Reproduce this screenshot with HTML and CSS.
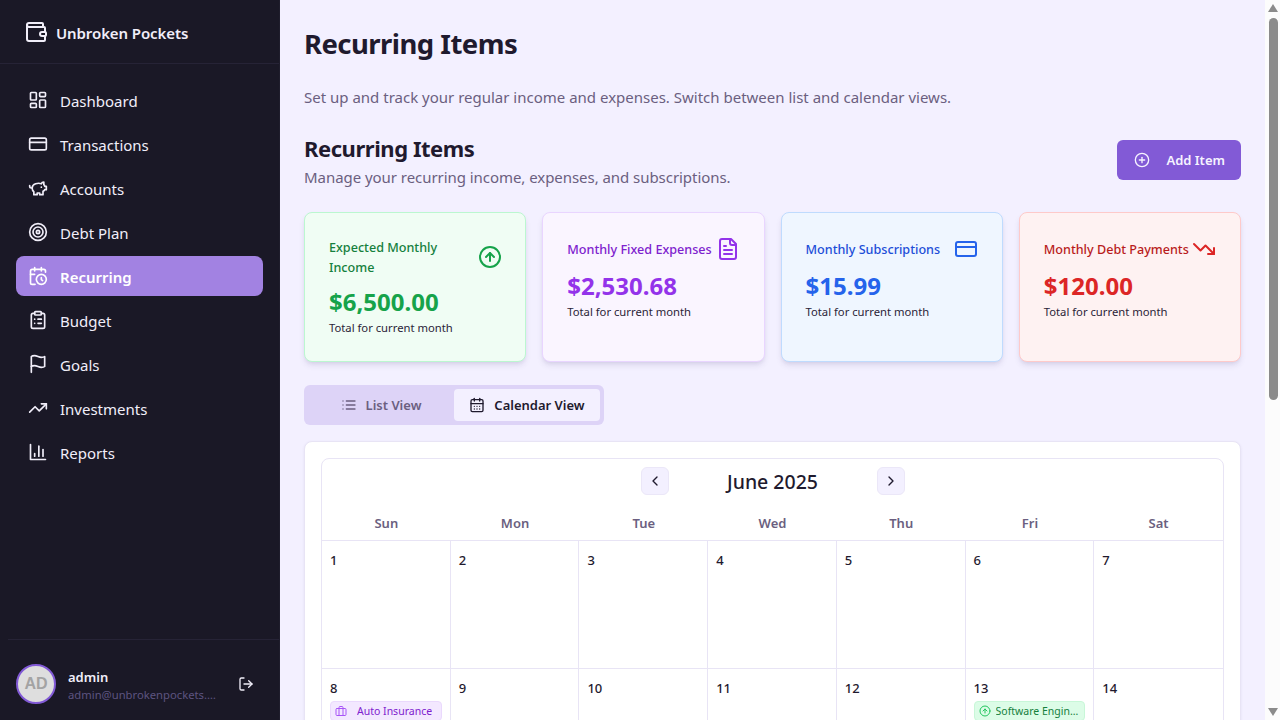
FILE: index.html
```html
<!DOCTYPE html>
<html lang="en">
<head>
<meta charset="utf-8">
<title>Recurring Items - Unbroken Pockets</title>
<link rel="stylesheet" href="styles.css">
</head>
<body>
<svg class="defs" width="0" height="0" aria-hidden="true">
  <symbol id="i-wallet" viewBox="0 0 24 24"><path d="M19 7V4a1 1 0 0 0-1-1H5a2 2 0 0 0 0 4h15a1 1 0 0 1 1 1v4h-3a2 2 0 0 0 0 4h3a1 1 0 0 0 1-1v-2a1 1 0 0 0-1-1"/><path d="M3 5v14a2 2 0 0 0 2 2h15a1 1 0 0 0 1-1v-4"/></symbol>
  <symbol id="i-dash" viewBox="0 0 24 24"><rect width="7" height="9" x="3" y="3" rx="1"/><rect width="7" height="5" x="14" y="3" rx="1"/><rect width="7" height="9" x="14" y="12" rx="1"/><rect width="7" height="5" x="3" y="16" rx="1"/></symbol>
  <symbol id="i-card" viewBox="0 0 24 24"><rect width="20" height="14" x="2" y="5" rx="2"/><path d="M2 10h20"/></symbol>
  <symbol id="i-piggy" viewBox="0 0 24 24"><path d="M19 5c-1.5 0-2.8 1.4-3 2-3.5-1.5-11-.3-11 5 0 1.8 0 3 2 4.5V20h4v-2h3v2h4v-4c1-.5 1.7-1 2-2h2v-4h-2c0-1-.5-1.5-1-2V5z"/><path d="M2 9v1c0 1.1.9 2 2 2h1"/><path d="M16 11h.01"/></symbol>
  <symbol id="i-target" viewBox="0 0 24 24"><circle cx="12" cy="12" r="10"/><circle cx="12" cy="12" r="6"/><circle cx="12" cy="12" r="2"/></symbol>
  <symbol id="i-calclock" viewBox="0 0 24 24"><path d="M21 7.5V6a2 2 0 0 0-2-2H5a2 2 0 0 0-2 2v14a2 2 0 0 0 2 2h3.5"/><path d="M16 2v4"/><path d="M8 2v4"/><path d="M3 10h5"/><path d="M17.5 17.5 16 16.3V14"/><circle cx="16" cy="16" r="6"/></symbol>
  <symbol id="i-clip" viewBox="0 0 24 24"><rect width="8" height="4" x="8" y="2" rx="1"/><path d="M16 4h2a2 2 0 0 1 2 2v14a2 2 0 0 1-2 2H6a2 2 0 0 1-2-2V6a2 2 0 0 1 2-2h2"/><path d="M12 11h4"/><path d="M12 16h4"/><path d="M8 11h.01"/><path d="M8 16h.01"/></symbol>
  <symbol id="i-flag" viewBox="0 0 24 24"><path d="M4 15s1-1 4-1 5 2 8 2 4-1 4-1V3s-1 1-4 1-5-2-8-2-4 1-4 1z"/><path d="M4 22v-7"/></symbol>
  <symbol id="i-up" viewBox="0 0 24 24"><path d="M22 7 13.5 15.5 8.5 10.5 2 17"/><path d="M16 7h6v6"/></symbol>
  <symbol id="i-down" viewBox="0 0 24 24"><path d="M22 17 13.5 8.5 8.5 13.5 2 7"/><path d="M16 17h6v-6"/></symbol>
  <symbol id="i-bars" viewBox="0 0 24 24"><path d="M3 3v18h18"/><path d="M18 17V9"/><path d="M13 17V5"/><path d="M8 17v-3"/></symbol>
  <symbol id="i-logout" viewBox="0 0 24 24"><path d="M9 21H5a2 2 0 0 1-2-2V5a2 2 0 0 1 2-2h4"/><path d="m16 17 5-5-5-5"/><path d="M21 12H9"/></symbol>
  <symbol id="i-plus" viewBox="0 0 24 24"><circle cx="12" cy="12" r="10"/><path d="M8 12h8"/><path d="M12 8v8"/></symbol>
  <symbol id="i-arrowup" viewBox="0 0 24 24"><circle cx="12" cy="12" r="10"/><path d="m16 12-4-4-4 4"/><path d="M12 16V8"/></symbol>
  <symbol id="i-file" viewBox="0 0 24 24"><path d="M15 2H6a2 2 0 0 0-2 2v16a2 2 0 0 0 2 2h12a2 2 0 0 0 2-2V7Z"/><path d="M14 2v4a2 2 0 0 0 2 2h4"/><path d="M10 9H8"/><path d="M16 13H8"/><path d="M16 17H8"/></symbol>
  <symbol id="i-list" viewBox="0 0 24 24"><path d="M3 12h.01"/><path d="M3 18h.01"/><path d="M3 6h.01"/><path d="M8 12h13"/><path d="M8 18h13"/><path d="M8 6h13"/></symbol>
  <symbol id="i-cal" viewBox="0 0 24 24"><path d="M8 2v4"/><path d="M16 2v4"/><rect width="18" height="18" x="3" y="4" rx="2"/><path d="M3 10h18"/><path d="M8 14h.01"/><path d="M12 14h.01"/><path d="M16 14h.01"/><path d="M8 18h.01"/><path d="M12 18h.01"/><path d="M16 18h.01"/></symbol>
  <symbol id="i-left" viewBox="0 0 24 24"><path d="m15 18-6-6 6-6"/></symbol>
  <symbol id="i-right" viewBox="0 0 24 24"><path d="m9 18 6-6-6-6"/></symbol>
  <symbol id="i-case" viewBox="0 0 24 24"><rect width="20" height="14" x="2" y="7" rx="2"/><path d="M16 21V5a2 2 0 0 0-2-2h-4a2 2 0 0 0-2 2v16"/></symbol>
</svg>

<div class="app">
  <aside class="sidebar">
    <div class="brand">
      <svg class="ico ico-brand"><use href="#i-wallet"/></svg>
      <span class="brand-name">Unbroken Pockets</span>
    </div>
    <nav class="nav">
      <a class="nav-item"><svg class="ico"><use href="#i-dash"/></svg>Dashboard</a>
      <a class="nav-item"><svg class="ico"><use href="#i-card"/></svg>Transactions</a>
      <a class="nav-item"><svg class="ico"><use href="#i-piggy"/></svg>Accounts</a>
      <a class="nav-item"><svg class="ico"><use href="#i-target"/></svg>Debt Plan</a>
      <a class="nav-item active"><svg class="ico"><use href="#i-calclock"/></svg>Recurring</a>
      <a class="nav-item"><svg class="ico"><use href="#i-clip"/></svg>Budget</a>
      <a class="nav-item"><svg class="ico"><use href="#i-flag"/></svg>Goals</a>
      <a class="nav-item"><svg class="ico"><use href="#i-up"/></svg>Investments</a>
      <a class="nav-item"><svg class="ico"><use href="#i-bars"/></svg>Reports</a>
    </nav>
    <div class="user">
      <div class="avatar">AD</div>
      <div class="user-info">
        <div class="user-name">admin</div>
        <div class="user-mail">admin@unbrokenpockets.com</div>
      </div>
      <svg class="ico ico-logout"><use href="#i-logout"/></svg>
    </div>
  </aside>

  <main class="main">
    <h1 class="page-title">Recurring Items</h1>
    <p class="page-sub">Set up and track your regular income and expenses. Switch between list and calendar views.</p>

    <div class="section-head">
      <div>
        <h2 class="section-title">Recurring Items</h2>
        <p class="section-desc">Manage your recurring income, expenses, and subscriptions.</p>
      </div>
      <button class="add-btn"><svg class="ico ico-plus"><use href="#i-plus"/></svg>Add Item</button>
    </div>

    <div class="stats">
      <div class="stat stat-green">
        <div class="stat-head"><span class="stat-label">Expected Monthly Income</span><svg class="ico stat-ico"><use href="#i-arrowup"/></svg></div>
        <div class="stat-value">$6,500.00</div>
        <div class="stat-note">Total for current month</div>
      </div>
      <div class="stat stat-purple">
        <div class="stat-head"><span class="stat-label">Monthly Fixed Expenses</span><svg class="ico stat-ico"><use href="#i-file"/></svg></div>
        <div class="stat-value">$2,530.68</div>
        <div class="stat-note">Total for current month</div>
      </div>
      <div class="stat stat-blue">
        <div class="stat-head"><span class="stat-label">Monthly Subscriptions</span><svg class="ico stat-ico"><use href="#i-card"/></svg></div>
        <div class="stat-value">$15.99</div>
        <div class="stat-note">Total for current month</div>
      </div>
      <div class="stat stat-red">
        <div class="stat-head"><span class="stat-label">Monthly Debt Payments</span><svg class="ico stat-ico"><use href="#i-down"/></svg></div>
        <div class="stat-value">$120.00</div>
        <div class="stat-note">Total for current month</div>
      </div>
    </div>

    <div class="tabs">
      <button class="tab"><svg class="ico ico-tab"><use href="#i-list"/></svg>List View</button>
      <button class="tab tab-on"><svg class="ico ico-tab"><use href="#i-cal"/></svg>Calendar View</button>
    </div>

    <section class="cal-card">
      <div class="cal">
        <div class="cal-nav">
          <button class="cal-btn"><svg class="ico ico-chev"><use href="#i-left"/></svg></button>
          <div class="cal-month">June 2025</div>
          <button class="cal-btn"><svg class="ico ico-chev"><use href="#i-right"/></svg></button>
        </div>
        <div class="cal-week">
          <div>Sun</div><div>Mon</div><div>Tue</div><div>Wed</div><div>Thu</div><div>Fri</div><div>Sat</div>
        </div>
        <div class="cal-grid">
          <div class="day">1</div><div class="day">2</div><div class="day">3</div><div class="day">4</div><div class="day">5</div><div class="day">6</div><div class="day">7</div>
          <div class="day">8<div class="chip chip-purple"><svg class="ico ico-chip"><use href="#i-case"/></svg><span class="chip-text">Auto Insurance</span></div></div>
          <div class="day">9</div><div class="day">10</div><div class="day">11</div><div class="day">12</div>
          <div class="day">13<div class="chip chip-green"><svg class="ico ico-chip"><use href="#i-arrowup"/></svg><span class="chip-text">Software Engineer Salary</span></div></div>
          <div class="day">14</div>
          <div class="day">15</div><div class="day">16</div><div class="day">17</div><div class="day">18</div><div class="day">19</div><div class="day">20</div><div class="day">21</div>
          <div class="day">22</div><div class="day">23</div><div class="day">24</div><div class="day">25</div><div class="day">26</div><div class="day">27</div><div class="day">28</div>
          <div class="day">29</div><div class="day">30</div><div class="day"></div><div class="day"></div><div class="day"></div><div class="day"></div><div class="day"></div>
        </div>
      </div>
    </section>
  </main>

  <div class="scrollbar" aria-hidden="true">
    <span class="sb-arrow sb-arrow-up"></span>
    <span class="sb-track"><span class="sb-thumb"></span></span>
    <span class="sb-arrow sb-arrow-down"></span>
  </div>
</div>
</body>
</html>
```

FILE: styles.css
```css
* { box-sizing: border-box; }
html, body { margin: 0; height: 100%; }
body {
  font-family: "Noto Sans", "Open Sans", sans-serif;
  color: #1f1a2e;
  background: #f3f0ff;
}
.defs { position: absolute; }
.ico {
  width: 20px; height: 20px; flex: none;
  fill: none; stroke: currentColor; stroke-width: 2;
  stroke-linecap: round; stroke-linejoin: round;
}
.app { display: flex; height: 100vh; overflow: hidden; }

/* Sidebar */
.sidebar {
  width: 280px; flex: none; height: 100%;
  display: flex; flex-direction: column;
  background: #1a1826; color: #f1eef9;
  border-right: 1px solid #1f1d2c;
}
.brand {
  height: 64px; flex: none;
  display: flex; align-items: center; gap: 8px;
  padding: 0 24px;
  border-bottom: 1px solid #262336;
}
.ico-brand { width: 24px; height: 24px; }
.brand-name { font-size: 15px; font-weight: 600; letter-spacing: -.1px; padding-top: 2px; }
.nav {
  flex: 1;
  display: flex; flex-direction: column; gap: 4px;
  padding: 16px 16px 0;
}
.nav-item {
  height: 40px; display: flex; align-items: center; gap: 12px;
  padding: 2px 12px 0; border-radius: 8px;
  font-size: 15px; line-height: 24px;
}
.nav-item .ico { margin-top: -2px; }
.nav-item.active { background: #a282e2; color: #fff; font-weight: 600; }
.user {
  margin-left: 8px;
  height: 81px; flex: none;
  display: flex; align-items: flex-start; gap: 12px;
  padding: 24px 25px 0 8px;
  border-top: 1px solid #262336;
}
.avatar {
  width: 40px; height: 40px; flex: none;
  display: flex; align-items: center; justify-content: center;
  border-radius: 50%; border: 2px solid #825ad6;
  background: #dedede; color: #a3a3a3;
  font-family: "Liberation Sans", sans-serif;
  font-size: 16px; font-weight: 700;
}
.user-info { width: 149px; flex: none; padding-top: 4px; }
.user-name { font-size: 13px; font-weight: 600; line-height: 18px; }
.user-mail {
  margin-top: 1px;
  font-size: 11.25px; line-height: 16px; color: #5d5480;
  white-space: nowrap; overflow: hidden; text-overflow: ellipsis;
}
.ico-logout { width: 16px; height: 16px; margin: 12px 0 0 auto; }

/* Main */
.main {
  flex: 1; min-width: 0; height: 100%;
  overflow-y: auto;
  padding: 24px 24px 94px;
}
.page-title { margin: 0; font-size: 27.5px; line-height: 40px; font-weight: 700; letter-spacing: -.55px; color: #1f1a2e; }
.page-sub { margin: 21px 0 0; font-size: 15px; line-height: 24px; color: #6b5f80; }
.section-head {
  margin-top: 23px;
  display: flex; justify-content: space-between; align-items: flex-start;
}
.section-title { margin: 0; font-size: 22px; line-height: 32px; font-weight: 700; letter-spacing: -.45px; color: #1f1a2e; }
.section-desc { margin: 1px 0 0; font-size: 15px; line-height: 24px; letter-spacing: -.05px; color: #6b5f80; }
.add-btn {
  height: 40px; margin-top: 8px; padding: 0 16px 0 17px;
  display: flex; align-items: center; gap: 16px;
  border: 0; border-radius: 6px;
  background: #825ad6; color: #f6f3ff;
  font: 600 13px/20px "Noto Sans", sans-serif;
}
.ico-plus { width: 16px; height: 16px; }

/* Stats */
.stats {
  margin-top: 23px;
  display: grid; grid-template-columns: repeat(4, 1fr); gap: 16px;
}
.stat {
  padding: 24px 24px 23px;
  border: 1px solid; border-radius: 8px;
  box-shadow: 0 4px 6px -1px rgba(60, 40, 110, .12), 0 2px 4px -2px rgba(60, 40, 110, .1);
}
.stat-head { display: flex; align-items: center; justify-content: space-between; min-height: 25px; }
.stat-label { padding-top: 1px; font-size: 12.6px; line-height: 20px; font-weight: 500; }
.stat-ico { width: 24px; height: 24px; margin-top: -2px; }
.stat-value { margin-top: 8px; font-size: 24px; line-height: 32px; font-weight: 700; }
.stat-note { font-size: 11.25px; line-height: 20px; color: #2b2438; }
.stat-green { background: #f0fdf4; border-color: #bbf7d0; }
.stat-green .stat-label { color: #15803d; }
.stat-green .stat-ico, .stat-green .stat-value { color: #16a34a; }
.stat-green .stat-ico { margin-right: -1px; }
.stat-purple { background: #faf5ff; border-color: #e9d5ff; }
.stat-purple .stat-label { color: #7e22ce; }
.stat-purple .stat-ico, .stat-purple .stat-value { color: #9333ea; }
.stat-blue { background: #eff6ff; border-color: #bfdbfe; }
.stat-blue .stat-label { color: #1d4ed8; }
.stat-blue .stat-ico, .stat-blue .stat-value { color: #2563eb; }
.stat-red { background: #fef2f2; border-color: #fecaca; }
.stat-red .stat-label { color: #b91c1c; }
.stat-red .stat-ico, .stat-red .stat-value { color: #dc2626; }

/* Tabs */
.tabs {
  margin-top: 23px;
  width: 300px; height: 40px; padding: 4px;
  display: grid; grid-template-columns: 1fr 1fr;
  background: #ddd3f7; border-radius: 6px;
}
.tab {
  height: 32px;
  display: flex; align-items: center; justify-content: center; gap: 9px;
  border: 0; border-radius: 4px; background: transparent; color: #6b5f80;
  font: 600 13px/20px "Noto Sans", sans-serif;
}
.tab-on { background: #f3f0ff; color: #1f1a2e; }
.ico-tab { width: 16px; height: 16px; }

/* Calendar */
.cal-card {
  margin-top: 16px; padding: 16px;
  background: #fff; border: 1px solid #e8e4f5; border-radius: 8px;
  box-shadow: 0 1px 3px rgba(60, 40, 110, .08);
}
.cal { border: 1px solid #e8e4f5; border-radius: 8px; }
.cal-nav {
  height: 46px; padding-top: 8px;
  display: flex; align-items: flex-start; justify-content: center; gap: 58px;
}
.cal-btn {
  width: 28px; height: 28px; padding: 0;
  display: flex; align-items: center; justify-content: center;
  background: #f3f0ff; border: 1px solid #ebe7f8; border-radius: 6px; color: #1f1a2e;
}
.ico-chev { width: 16px; height: 16px; }
.cal-month { min-width: 92px; text-align: center; font-size: 19.5px; line-height: 30px; font-weight: 500; color: #1f1a2e; }
.cal-week {
  height: 35px;
  display: grid; grid-template-columns: repeat(7, 1fr);
  align-items: center; text-align: center;
  font-size: 13px; font-weight: 600; color: #6b5f80;
}
.cal-grid {
  display: grid; grid-template-columns: repeat(7, 1fr); grid-auto-rows: 128px;
  border-top: 1px solid #e8e4f5;
}
.day {
  min-width: 0; padding: 8px;
  border-right: 1px solid #e8e4f5; border-bottom: 1px solid #e8e4f5;
  font-size: 13px; line-height: 22px; font-weight: 500; color: #1f1a2e;
}
.day:nth-child(7n) { border-right: 0; }
.chip {
  margin-top: 2px; height: 20px; padding: 0 4px;
  display: flex; align-items: center; gap: 5px;
  border: 1px solid; border-radius: 4px;
  font-size: 10.5px; line-height: 16px; font-weight: 400;
}
.chip-text { min-width: 0; white-space: nowrap; overflow: hidden; text-overflow: ellipsis; }
.ico-chip { width: 12px; height: 12px; }
.chip-purple { background: #f3e8ff; border-color: #ead9fd; color: #7e22ce; }
.chip-purple .ico-chip { margin-right: 5px; color: #a855f7; }
.chip-green { background: #dcfce7; border-color: #c8f7d8; color: #15803d; }
.chip-green .ico-chip { color: #22c55e; }

/* Window scrollbar */
.scrollbar {
  width: 15px; flex: none; height: 100%;
  display: flex; flex-direction: column; align-items: center;
  background: #fcfcfc;
}
.sb-track { flex: 1; width: 100%; padding: 0 3px; }
.sb-thumb { display: block; width: 9px; height: 382px; background: #8b8b8b; border-radius: 5px; margin-left: .5px; }
.sb-arrow { width: 0; height: 0; flex: none; border-left: 5px solid transparent; border-right: 5px solid transparent; }
.sb-arrow-up { margin: 4px 0 6px; border-bottom: 8px solid #8b8b8b; }
.sb-arrow-down { margin: 6px 0 4px; border-top: 8px solid #8b8b8b; }
```
